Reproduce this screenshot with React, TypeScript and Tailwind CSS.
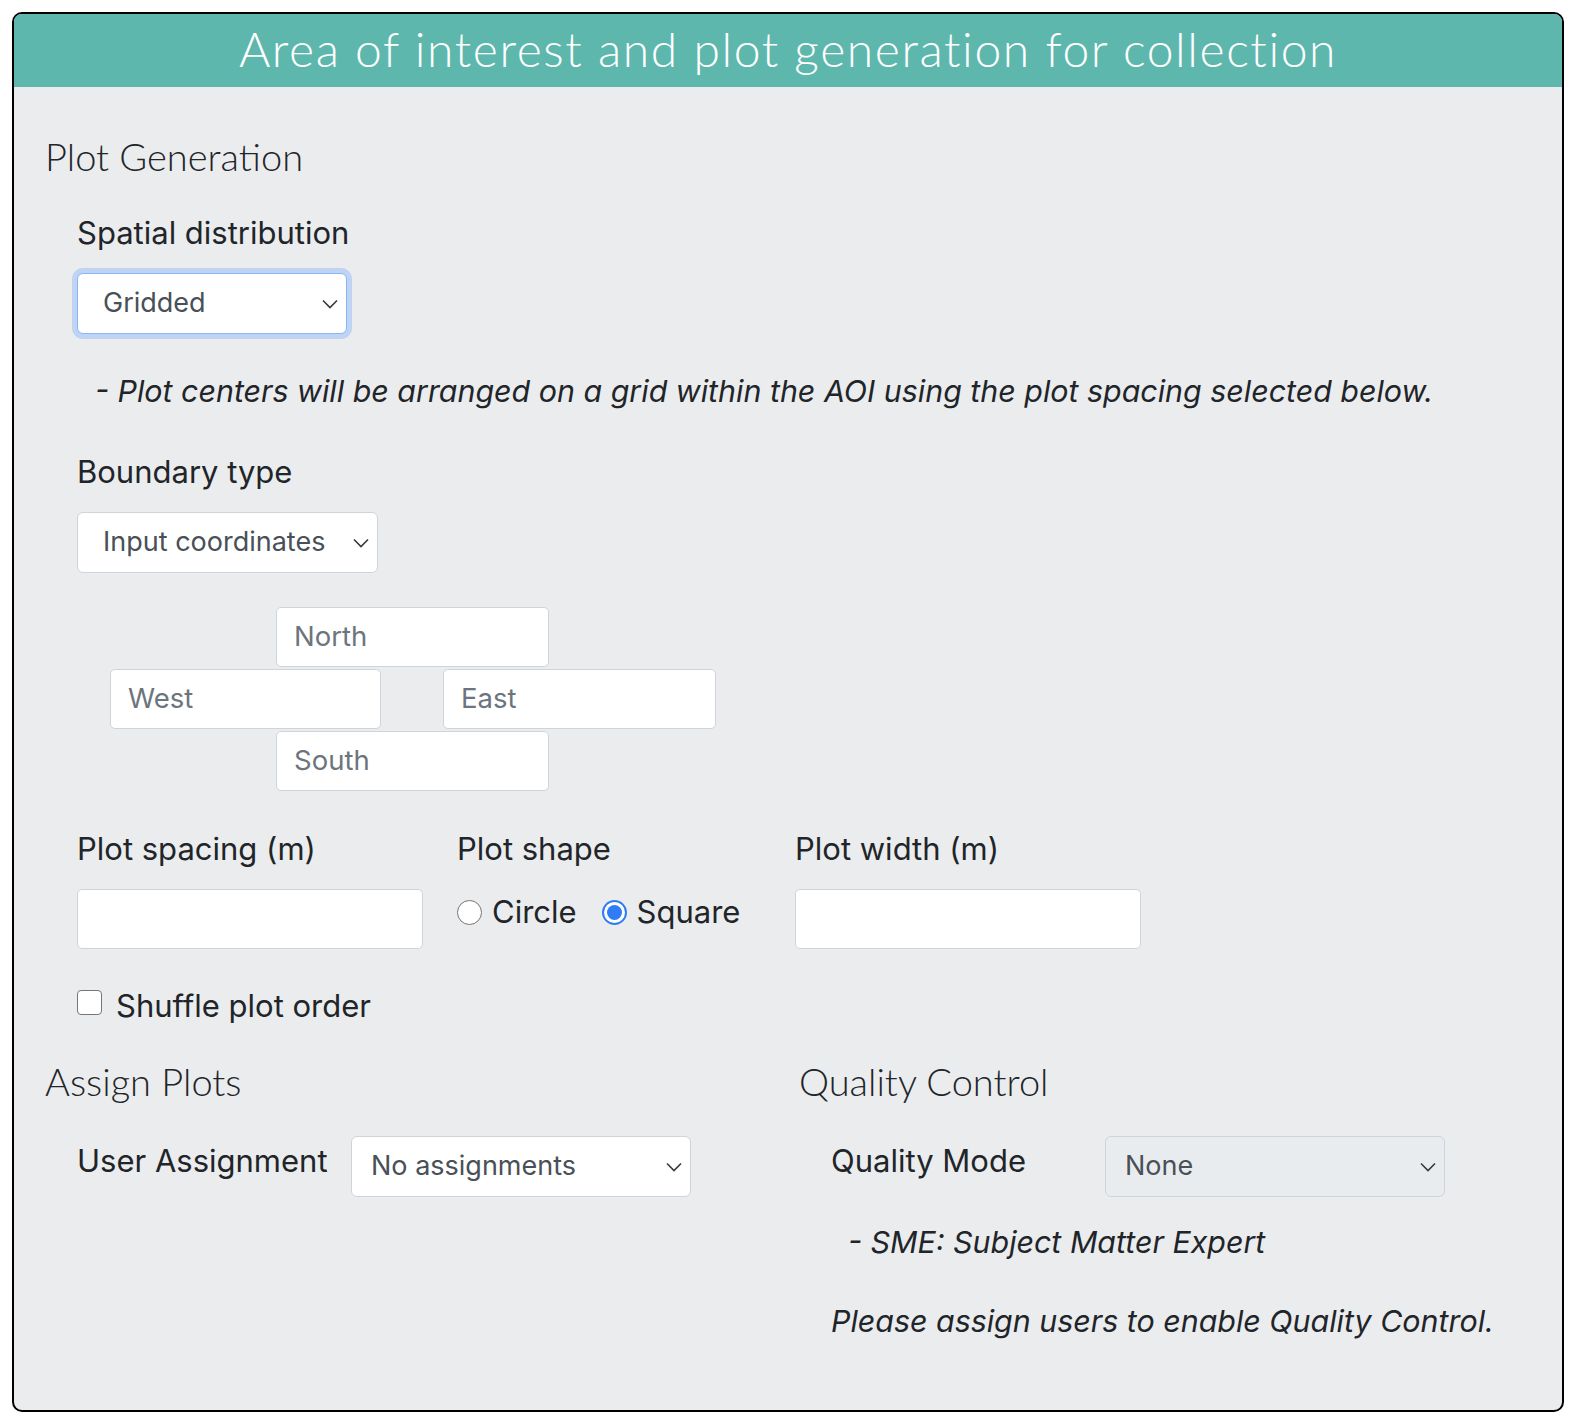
import React from 'react';

const body = "font-['Inter','Liberation_Sans',sans-serif]";
const thin = "font-['Lato','Open_Sans',sans-serif] font-light";

const Chevron = () => (
    <svg width="16" height="10" viewBox="0 0 16 10" className="shrink-0">
        <path d="M1 1.5 L8 8.5 L15 1.5" fill="none" stroke="#343a40" strokeWidth="1.6" />
    </svg>
);

const Select = ({
    value,
    className = '',
    focused = false,
    disabled = false,
}: {
    value: string;
    className?: string;
    focused?: boolean;
    disabled?: boolean;
}) => (
    <div
        className={`flex h-[61px] items-center justify-between rounded-[6px] border pr-[8px] text-[27px] text-[#495057] ${
            focused
                ? 'border-[#86b7fe] shadow-[0_0_0_5px_#bfd3f3]'
                : 'border-[#ced4da]'
        } ${disabled ? 'bg-[#e9ecef]' : 'bg-white'} ${className}`}
    >
        <span>{value}</span>
        <Chevron />
    </div>
);

const TextInput = ({
    placeholder = '',
    className = '',
}: {
    placeholder?: string;
    className?: string;
}) => (
    <div
        className={`flex h-[60px] items-center rounded-[5px] border border-[#ced4da] bg-white pl-[17px] text-[27.5px] text-[#6c757d] ${className}`}
    >
        {placeholder}
    </div>
);

const Radio = ({ checked }: { checked?: boolean }) =>
    checked ? (
        <span className="flex h-[25px] w-[25px] items-center justify-center rounded-full border-[2px] border-[#2f7cf6] bg-white">
            <span className="h-[15px] w-[15px] rounded-full bg-[#2f7cf6]" />
        </span>
    ) : (
        <span className="h-[25px] w-[25px] rounded-full border-[1.5px] border-[#767676] bg-white" />
    );

export default function App() {
    return (
        <div className={`bg-white px-3 pt-3 pb-[14px] text-[31px] text-[#212529] ${body}`}>
            <div className="h-[1400px] overflow-hidden rounded-[10px] border-2 border-black bg-[#ebecee]">
                <div className="flex h-[73px] items-center justify-center bg-[#5eb7ad] pb-[4px]">
                    <h1 className={`text-[48px] leading-none tracking-[1.6px] text-white ${thin}`}>
                        Area of interest and plot generation for collection
                    </h1>
                </div>

                <div className="px-[31px] pt-[49px]">
                    <h2 className={`h-[40px] text-[38px] leading-[40px] ${thin}`}>Plot Generation</h2>

                    <div className="pl-[32px]">
                        <label className="mt-[39px] block leading-[36px]">Spatial distribution</label>
                        <Select value="Gridded" focused className="mt-[22px] w-[270px] pl-[25px]" />
                        <p className="mt-[39px] pl-[18px] text-[30.4px] italic leading-[36px]">
                            - Plot centers will be arranged on a grid within the AOI using the plot spacing
                            selected below.
                        </p>

                        <label className="mt-[45px] block leading-[36px]">Boundary type</label>
                        <Select value="Input coordinates" className="mt-[22px] h-[60px] w-[301px] pl-[25px]" />

                        <div className="mt-[34px] flex flex-col gap-[2px]">
                            <TextInput placeholder="North" className="ml-[199px] w-[273px]" />
                            <div className="ml-[33px] flex gap-[62px]">
                                <TextInput placeholder="West" className="w-[271px]" />
                                <TextInput placeholder="East" className="w-[273px]" />
                            </div>
                            <TextInput placeholder="South" className="ml-[199px] w-[273px]" />
                        </div>

                        <div className="mt-[40px] flex">
                            <div className="w-[380px]">
                                <label className="block leading-[36px]">Plot spacing (m)</label>
                                <TextInput className="mt-[22px] w-[346px]" />
                            </div>
                            <div className="w-[338px]">
                                <label className="block leading-[36px]">Plot shape</label>
                                <div className="mt-[22px] flex h-[46px] items-center">
                                    <Radio />
                                    <span className="ml-[10px]">Circle</span>
                                    <span className="ml-[25px] flex items-center">
                                        <Radio checked />
                                    </span>
                                    <span className="ml-[10px]">Square</span>
                                </div>
                            </div>
                            <div>
                                <label className="block leading-[36px]">Plot width (m)</label>
                                <TextInput className="mt-[22px] w-[346px]" />
                            </div>
                        </div>

                        <label className="mt-[39px] flex h-[36px] items-start">
                            <span className="mt-[2px] h-[25px] w-[25px] rounded-[4px] border-[1.5px] border-[#767676] bg-white" />
                            <span className="ml-[14px] leading-[36px]">Shuffle plot order</span>
                        </label>
                    </div>

                    <div className="mt-[37px] grid grid-cols-[754px_1fr]">
                        <div>
                            <h2 className={`h-[40px] text-[38px] leading-[40px] ${thin}`}>Assign Plots</h2>
                            <div className="mt-[35px] flex items-start pl-[32px]">
                                <span className="w-[274px] pt-[7px] leading-[36px]">User Assignment</span>
                                <Select value="No assignments" className="h-[60px] w-[340px] pl-[19px]" />
                            </div>
                        </div>
                        <div>
                            <h2 className={`h-[40px] text-[38px] leading-[40px] ${thin}`}>Quality Control</h2>
                            <div className="pl-[32px]">
                                <div className="mt-[35px] flex items-start">
                                    <span className="w-[274px] pt-[7px] leading-[36px]">Quality Mode</span>
                                    <Select value="None" disabled className="h-[60px] w-[340px] pl-[19px]" />
                                </div>
                                <p className="mt-[27px] pl-[17px] text-[30.4px] italic leading-[36px]">
                                    - SME: Subject Matter Expert
                                </p>
                                <p className="mt-[43px] text-[30.4px] italic leading-[36px]">
                                    Please assign users to enable Quality Control.
                                </p>
                            </div>
                        </div>
                    </div>
                </div>
            </div>
        </div>
    );
}
